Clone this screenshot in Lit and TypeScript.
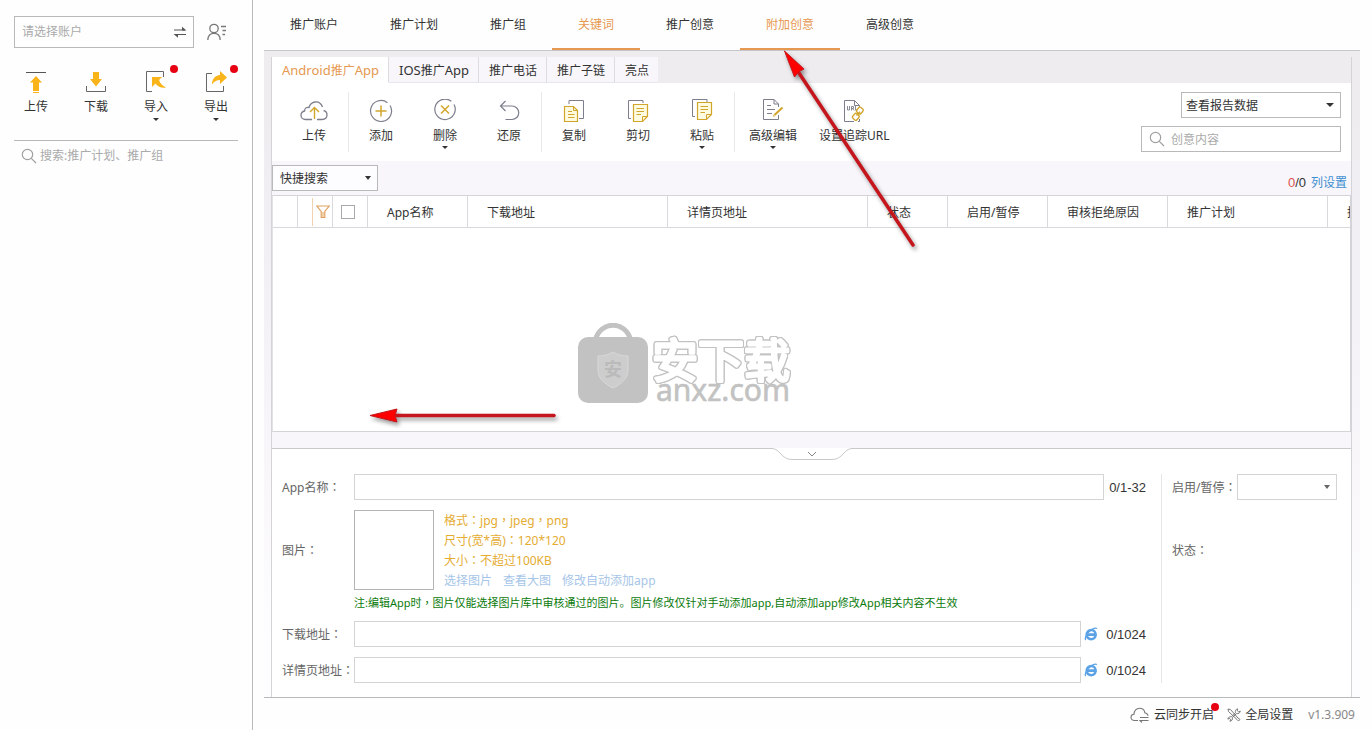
import { LitElement, html, svg, css, nothing, TemplateResult } from "lit";
import { customElement, state } from "lit/decorators.js";
import { classMap } from "lit/directives/class-map.js";

type Icon = TemplateResult;
interface Tool {
  label: string;
  icon: Icon;
  menu?: boolean;
  dot?: boolean;
}

const G = "#7d7f8c";
const Y = "#d2a52c";

const frame = (w: number, h: number, body: unknown): Icon => html`
  <svg width=${w} height=${h} viewBox="0 0 ${w} ${h}" fill="none" aria-hidden="true">${body}</svg>
`;

const caret = (w: number, h: number) =>
  html`<svg class="caret" width=${w} height=${h} viewBox="0 0 ${w} ${h}" aria-hidden="true">
    <path d="M0 0H${w}L${w / 2} ${h}Z" fill="currentColor" />
  </svg>`;

// Full-width punctuation set in the middle of its cell.
const colon = html`<span class="mid">：</span>`;
const comma = html`<span class="mid">，</span>`;

const magnifier = frame(
  16,
  16,
  svg`<g stroke="#a0a0a0" stroke-width="1.2"><circle cx="6.5" cy="6.5" r="5.2" /><path d="M10.3 10.3L15 15" /></g>`,
);

const swapIcon = frame(
  14,
  12,
  svg`<path d="M1 4H12M2 8.500H13" stroke="#555" stroke-width="1.200" /><path d="M9 .8L13.500 4.600H9ZM5 11.700L.5 7.900H5Z" fill="#555" />`,
);

const userIcon = frame(
  20,
  18,
  svg`<g stroke="#777" stroke-width="1.3"><circle cx="7" cy="5.500" r="4.200" /><path d="M.8 17C1 12.500 3.500 10.400 7 10.400S13 12.500 13.200 17" /><path d="M14 3.500H19M15.500 7.500H19M15.500 11.500H18" /></g>`,
);

const sideUpload = frame(
  22,
  22,
  svg`<path d="M1 1.500H21" stroke="#555" /><path d="M11 5L17 11.500H14V20H8V11.500H5ZM8 21H14V22H8Z" fill="#f8b418" />`,
);
const sideDownload = frame(
  22,
  22,
  svg`<path d="M1.500 15V20.500H20.500V15" stroke="#666" /><path d="M8 1H14V8H17L11 15.500L5 8H8Z" fill="#f8b418" />`,
);
const sideImport = frame(
  22,
  22,
  svg`<path d="M7 20.500H1.500V.5H18.500V6" stroke="#666" /><path d="M7 6H17L14 9C15.500 13 18 15 21 16.500C16.500 17.500 12.500 15.500 10.500 12.500L7 16Z" fill="#f8b418" />`,
);
const sideExport = frame(
  22,
  22,
  svg`<path d="M7 2.500H1.500V20.500H18.500V15" stroke="#666" /><path d="M15 0L22 6.500L15 13V9C11.500 9 9 10.500 7 13.500C7 8 10 4.500 15 4Z" fill="#f8b418" />`,
);

const cloudUpload = frame(
  28,
  24,
  svg`<path d="M17 20.500H22C25 20.500 27 18.500 27 15.800C27 13.500 25.500 12 23.600 11.500M22.500 8C21 4 18 2.500 15 3C12 3.500 9.800 5.500 9 8.500C6 8 4.500 9.500 4.600 12C2 12.500 1 14.500 1 16.300C1 18.700 3 20.500 5.500 20.500H12" stroke="${G}" stroke-width="1.300" /><path d="M14.500 20V8.500M10 13L14.500 8.500L19 13" stroke="${Y}" stroke-width="1.400" />`,
);
const addIcon = frame(
  24,
  24,
  svg`<path d="M18.500 3.700A10.500 10.500 0 1 0 21 6.500" stroke="${G}" stroke-width="1.200" /><path d="M12 6.500V17.500M6.500 12H17.500" stroke="${Y}" stroke-width="1.500" />`,
);
const removeIcon = frame(
  24,
  24,
  svg`<path d="M18.300 2.300A10.200 10.200 0 1 0 21 5.500" stroke="${G}" stroke-width="1.200" /><path d="M8 6.500L16 14.500M16 6.500L8 14.500" stroke="${Y}" stroke-width="1.500" />`,
);
const undoIcon = frame(
  24,
  24,
  svg`<path d="M8.500 2L3.500 7L8.500 12M3.500 7H15A6.500 6.500 0 0 1 15 20.500H8.500" stroke="${G}" stroke-width="1.200" />`,
);
const copyIcon = frame(
  24,
  24,
  svg`<path d="M7 5V1.500H21.500V19.500H17" stroke="${G}" /><path d="M2.500 7.500H11.500L15.500 11.500V22.500H2.500Z" fill="#fffbe0" stroke="${Y}" stroke-width="1.200" /><path d="M11.500 7.500V11.500H15.500M6 12.500H10M6 15.500H12.500M6 18.500H12.500" stroke="${Y}" />`,
);
const cutIcon = frame(
  24,
  24,
  svg`<path d="M17 4V1.500H2.500V19.500H5" stroke="${G}" /><path d="M7.500 5.500H21.500V17.500L16.500 22.500H7.500Z" fill="#fffbe0" stroke="${Y}" stroke-width="1.200" /><path d="M21.500 17.500H16.500V22.500M10.500 9.500H18M10.500 12.500H18M10.500 15.500H15" stroke="${Y}" />`,
);
const pasteIcon = frame(
  24,
  24,
  svg`<path d="M17 3V.5H2.500V17.500H5" stroke="${G}" /><path d="M7.500 3.500H21.500V15.500L16.500 20.500H7.500Z" fill="#fffbe0" stroke="${Y}" stroke-width="1.200" /><path d="M21.500 15.500H16.500V20.500M10.500 7.500H18M10.500 10.500H18M10.500 13.500H15" stroke="${Y}" />`,
);
const editIcon = frame(
  24,
  24,
  svg`<path d="M17.500 16V20.500H2.500V.5H13L17.500 5V8M13 .5V5H17.500M6 6.500H10M6 10.500H14M6 14.500H11" stroke="${G}" /><path d="M13.500 16L21.500 8.500" stroke="${Y}" stroke-width="2" /><path d="M12 17.800L12.500 15.500L14 17.200Z" fill="${Y}" />`,
);
const urlIcon = frame(
  24,
  24,
  svg`<path d="M12 22.500H2.500V1.500H12.500L17.500 6.500V8M12.500 1.500V6.500H17.500M17.500 20V22.500H16" stroke="${G}" />
    <path d="M5.500 7V11H7.500V7M9.500 11.500V7.500H11.500V9.500H9.500M10.500 9.500L12 11.500M13.500 7V11H15.500" stroke="${G}" stroke-width=".9" />
    <g stroke="${Y}" stroke-width="1.400"><rect x="15.500" y="8.500" width="5.500" height="6" rx="1.500" transform="rotate(40 18 11)" /><rect x="11" y="15" width="5.500" height="6" rx="1.500" transform="rotate(40 14 18)" /><path d="M14.500 16.500L18 12.800" /></g>`,
);

const funnel = frame(
  14,
  14,
  svg`<path d="M.8 1H13.200L8.800 6.500V12.500H5.200V6.500Z" stroke="#e0a160" stroke-width="1.200" /><path d="M6 7H8V12H6Z" fill="#f0d0a8" />`,
);

const browserIcon = frame(
  14,
  14,
  svg`<path d="M11.500 9C10.900 11 9.300 12.200 7.200 12.200C4.500 12.200 2.700 10.200 2.700 7.600S4.700 3 7.200 3S11.600 5 11.600 7.600H4" stroke="#5ba3e6" stroke-width="2.600" /><path d="M1.800 13C.4 11.800 2.200 7.200 5.800 4C9 1.400 12 .4 12.800 1.800" stroke="#5ba3e6" stroke-width="1.300" />`,
);

const cloudSync = frame(
  20,
  16,
  svg`<path d="M8 13.500H4.500C2.500 13.500 1 12.200 1 10.300C1 8.500 2.200 7.300 4 7.200C4 3.700 6.500 1.200 9.500 1.200C12.500 1.200 14.500 3.200 14.800 5.700C16.500 6 17.800 7.200 18 8.800" stroke="#777" stroke-width="1.100" /><path d="M10 10.500H18.500M18.500 13.500H10L12 15.500" stroke="#777" stroke-width="1.100" />`,
);
const toolsIcon = frame(
  14,
  14,
  svg`<g stroke="#777"><path d="M1 1L3.500 1.500L11 10L13 11.500L11.500 13L10 11.500L1.500 3.500Z" /><path d="M10.500 .8C8.800 1.300 8 3 8.500 4.700L4.500 8.800C2.800 8.400 1.200 9.300.8 11L2.800 10.600L3.500 11.500L3 13.300C4.800 13 5.700 11.500 5.300 9.700L9.500 5.600C11.300 6 13 5 13.300 3.200L11.500 3.700L10.300 2.700Z" /></g>`,
);

const SIDE_TOOLS: Tool[] = [
  { label: "上传", icon: sideUpload },
  { label: "下载", icon: sideDownload },
  { label: "导入", icon: sideImport, menu: true, dot: true },
  { label: "导出", icon: sideExport, menu: true, dot: true },
];

const NAV = ["推广账户", "推广计划", "推广组", "关键词", "推广创意", "附加创意", "高级创意"];
const NAV_MARKED = new Set(["关键词", "附加创意"]);

const TABS: TemplateResult[] = [
  html`<span class="latin">Android</span>推广<span class="latin">App</span>`,
  html`<span class="latin">IOS</span>推广<span class="latin">App</span>`,
  html`推广电话`,
  html`推广子链`,
  html`亮点`,
];

const TOOL_GROUPS: Tool[][] = [
  [{ label: "上传", icon: cloudUpload }],
  [
    { label: "添加", icon: addIcon },
    { label: "删除", icon: removeIcon, menu: true },
    { label: "还原", icon: undoIcon },
  ],
  [
    { label: "复制", icon: copyIcon },
    { label: "剪切", icon: cutIcon },
    { label: "粘贴", icon: pasteIcon, menu: true },
  ],
  [
    { label: "高级编辑", icon: editIcon, menu: true },
    { label: "设置追踪URL", icon: urlIcon },
  ],
];

const COLUMNS: [string, number][] = [
  ["App名称", 100],
  ["下载地址", 200],
  ["详情页地址", 200],
  ["状态", 80],
  ["启用/暂停", 100],
  ["审核拒绝原因", 120],
  ["推广计划", 160],
  ["推广组", 160],
];

const shared = css`
  :host {
    display: block;
    color: #333;
    font: 12px/16px "Noto Sans", "Noto Sans CJK SC", sans-serif;
  }
  * {
    box-sizing: border-box;
  }
  button,
  input,
  select {
    font: inherit;
    color: inherit;
    margin: 0;
    padding: 0;
    border: 0;
    border-radius: 0;
    background: none;
    outline: none;
  }
  input::placeholder {
    color: #aaa;
    opacity: 1;
  }
  svg {
    display: block;
    flex: none;
  }
  a {
    text-decoration: none;
  }
  .mid {
    font-family: "Noto Sans CJK TC", sans-serif;
    line-height: 0;
  }
  .pick {
    position: relative;
    display: flex;
    align-items: center;
    height: 26px;
    border: 1px solid #b9b9b9;
    background: #fff;
  }
  .pick select {
    appearance: none;
    flex: 1;
    width: 100%;
    height: 100%;
    padding: 2px 20px 0 4px;
  }
  .pick .caret {
    position: absolute;
    right: 6px;
    pointer-events: none;
  }
`;

@customElement("account-sidebar")
class AccountSidebar extends LitElement {
  static styles = [
    shared,
    css`
      :host {
        flex: none;
        width: 253px;
        padding: 16px 14px;
        border-right: 1px solid #b9b9bb;
      }
      .account {
        display: flex;
        align-items: center;
        gap: 13px;
      }
      .box {
        display: flex;
        align-items: center;
        width: 180px;
        height: 32px;
        padding: 0 6px 0 7px;
        border: 1px solid #b9b9b9;
      }
      .box input,
      .search input {
        flex: 1;
        min-width: 0;
      }
      .tools {
        display: flex;
        margin: 23px -8px 0;
      }
      .tool {
        position: relative;
        display: flex;
        flex-direction: column;
        align-items: center;
        width: 60px;
        height: 54px;
      }
      .tool span {
        margin: 6px 0 3px;
      }
      .dot {
        position: absolute;
        top: -6px;
        right: 8px;
        width: 8px;
        height: 8px;
        border-radius: 50%;
        background: #e60012;
      }
      .search {
        display: flex;
        align-items: center;
        gap: 3px;
        margin-top: 15px;
        padding: 7px 7px 0;
        border-top: 1px solid #b9b9b9;
      }
    `,
  ];

  render() {
    return html`
      <div class="account">
        <div class="box">
          <input aria-label="账户" placeholder="请选择账户" />
          <button aria-label="切换账户">${swapIcon}</button>
        </div>
        <button aria-label="账户管理">${userIcon}</button>
      </div>
      <div class="tools">
        ${SIDE_TOOLS.map(
          (t) => html`<button class="tool">
            ${t.icon}<span>${t.label}</span>${t.menu ? caret(6, 3) : nothing}
            ${t.dot ? html`<i class="dot"></i>` : nothing}
          </button>`,
        )}
      </div>
      <label class="search">${magnifier}<input aria-label="搜索" placeholder="搜索:推广计划、推广组" /></label>
    `;
  }
}

@customElement("creative-toolbar")
class CreativeToolbar extends LitElement {
  static styles = [
    shared,
    css`
      :host {
        display: flex;
        justify-content: space-between;
        height: 78px;
        padding: 9px 10px;
        background: #fff;
      }
      .groups,
      .group {
        display: flex;
      }
      .group {
        padding-top: 7px;
      }
      .group + .group {
        border-left: 1px solid #e9e9ec;
      }
      .group:first-child {
        padding-right: 2px;
      }
      .tool {
        display: flex;
        flex-direction: column;
        align-items: center;
        min-width: 64px;
        height: 52px;
        padding: 0 8px;
        white-space: nowrap;
      }
      .tool.wide {
        min-width: 76px;
      }
      .tool span {
        margin: 5px 0 2px;
      }
      .side {
        display: flex;
        flex-direction: column;
        align-items: flex-end;
        gap: 8px;
      }
      .side .pick {
        width: 160px;
      }
      .search {
        display: flex;
        align-items: center;
        gap: 6px;
        width: 200px;
        height: 26px;
        padding: 0 7px;
        border: 1px solid #b9b9b9;
      }
      .search input {
        flex: 1;
        min-width: 0;
        padding-top: 2px;
      }
    `,
  ];

  render() {
    return html`
      <div class="groups">
        ${TOOL_GROUPS.map(
          (g) => html`<div class="group">
            ${g.map(
              (t) => html`<button class=${classMap({ tool: true, wide: t.label.length > 3 })}>
                ${t.icon}<span>${t.label}</span>${t.menu ? caret(6, 3) : nothing}
              </button>`,
            )}
          </div>`,
        )}
      </div>
      <div class="side">
        <div class="pick">
          <select aria-label="报告数据">
            <option>查看报告数据</option>
          </select>
          ${caret(8, 4)}
        </div>
        <label class="search">${magnifier}<input aria-label="创意内容" placeholder="创意内容" /></label>
      </div>
    `;
  }
}

@customElement("creative-table")
class CreativeTable extends LitElement {
  static styles = [
    shared,
    css`
      :host {
        display: flex;
        flex-direction: column;
        flex: 1;
        min-height: 0;
      }
      .bar {
        display: flex;
        align-items: center;
        justify-content: space-between;
        height: 34px;
        padding-right: 4px;
      }
      .bar .pick {
        width: 106px;
        background: #fdfcfe;
      }
      .bar select {
        padding-left: 7px;
      }
      .stats {
        display: flex;
        gap: 5px;
        padding-top: 10px;
      }
      .num {
        font: 13px/16px "Liberation Sans", sans-serif;
      }
      .red {
        color: #d9534f;
      }
      .stats a {
        color: #3d8fd1;
      }
      .grid {
        position: relative;
        flex: 1;
        overflow: hidden;
        border: 1px solid #d4d4d8;
        border-left-color: #e2e2e6;
        background: #fff;
      }
      table {
        border-collapse: separate;
        border-spacing: 0;
        table-layout: fixed;
        width: 0;
      }
      th {
        height: 32px;
        padding: 2px 0 0 19px;
        border-right: 1px solid #d9d9dd;
        border-bottom: 1px solid #d9d9dd;
        font-weight: 400;
        text-align: left;
        white-space: nowrap;
      }
      th.tight {
        padding: 0;
      }
      .filter {
        display: flex;
        align-items: center;
        justify-content: center;
        width: 21px;
        height: 28px;
        margin-left: 14px;
        border-left: 1px solid #f2d3b0;
      }
      .tick {
        display: block;
        appearance: none;
        width: 14px;
        height: 14px;
        margin-left: 8px;
        border: 1px solid #a9a9ad;
      }
      .mark {
        position: absolute;
        top: 127px;
        left: calc(50% - 236px);
        pointer-events: none;
      }
      .outline {
        font: 400 46px "Noto Sans CJK SC", sans-serif;
        filter: drop-shadow(1px 0 #c2c2c2) drop-shadow(-1px 0 #c2c2c2) drop-shadow(0 1px #c2c2c2)
          drop-shadow(0 -1px #c2c2c2);
      }
      .site {
        font: 30px "Noto Sans", sans-serif;
      }
      .seal {
        font: 700 18px "Noto Sans CJK SC", sans-serif;
      }
    `,
  ];

  render() {
    return html`
      <div class="bar">
        <div class="pick">
          <select aria-label="快捷搜索">
            <option>快捷搜索</option>
          </select>
          ${caret(6, 4)}
        </div>
        <div class="stats">
          <span class="num"><span class="red">0</span>/0</span><a href="#">列设置</a>
        </div>
      </div>
      <div class="grid">
        <table>
          <colgroup>
            <col width="25" />
            <col width="35" />
            <col width="35" />
            ${COLUMNS.map((c) => html`<col width=${c[1]} />`)}
          </colgroup>
          <thead>
            <tr>
              <th class="tight"></th>
              <th class="tight"><button class="filter" aria-label="筛选">${funnel}</button></th>
              <th class="tight"><input class="tick" type="checkbox" aria-label="全选" /></th>
              ${COLUMNS.map((c) => html`<th>${c[0]}</th>`)}
            </tr>
          </thead>
        </table>
        <svg class="mark" width="230" height="92" viewBox="0 0 230 92">
          <path d="M19 18C24 -3 50 -3 55 18" fill="none" stroke="#c2c2c2" stroke-width="5" />
          <rect x="2" y="14" width="70" height="66" rx="10" fill="#c2c2c2" />
          <path
            d="M37 29C42 32 47 33 52 33V47C52 56 45 61 37 65C29 61 22 56 22 47V33C27 33 32 32 37 29Z"
            fill="#cdcdcd"
            stroke="#d8d8d8"
          />
          <text class="seal" x="28" y="53" fill="#bababa">安</text>
          <text class="outline" x="76" y="54" fill="#fff" stroke="#fff" stroke-width="3" stroke-linejoin="round">安下载</text>
          <text class="site" x="80" y="78" fill="#c2c2c2" stroke="#c2c2c2" stroke-width=".6">anxz.com</text>
        </svg>
      </div>
    `;
  }
}

@customElement("creative-form")
class CreativeForm extends LitElement {
  static styles = [
    shared,
    css`
      :host {
        position: relative;
        display: flex;
        flex: none;
        padding: 25px 14px 14px 10px;
        border-top: 1px solid #c9c9cc;
        background: #fff;
        color: #666;
      }
      .fold {
        position: absolute;
        top: -1px;
        left: calc(50% - 40px);
      }
      .fields {
        flex: 1;
        display: flex;
        flex-direction: column;
        gap: 10px;
        min-width: 0;
        padding-right: 15px;
      }
      .row {
        display: flex;
        align-items: center;
      }
      .row > label,
      .row > .label {
        flex: none;
        width: 72px;
        padding-top: 2px;
        white-space: nowrap;
      }
      .row > input {
        flex: 1;
        min-width: 0;
        height: 26px;
        padding: 0 4px;
        border: 1px solid #d4d4d4;
      }
      .count {
        flex: none;
        margin-left: 5px;
        padding-top: 2px;
        color: #333;
        font: 13px/16px "Liberation Sans", sans-serif;
      }
      .link {
        margin: 0 3px;
      }
      .preview {
        width: 80px;
        height: 80px;
        border: 1px solid #b4b4b4;
      }
      .facts {
        margin: 0 0 0 10px;
        padding-top: 1px;
        height: 80px;
        color: #e5ac32;
        line-height: 20px;
      }
      .facts p {
        margin: 0;
      }
      .facts a {
        margin-right: 11px;
        color: #a6c5e8;
      }
      .note {
        margin: -5px 0 0 72px;
        color: #0b7a0b;
        font-size: 11px;
      }
      .status {
        flex: none;
        width: 176px;
        padding-left: 10px;
        border-left: 1px solid #e6e6e8;
      }
      .status label {
        width: 65px;
      }
      .status .pick {
        flex: 1;
        border-color: #d4d4d4;
      }
      .status .state {
        height: 80px;
        margin-top: 10px;
      }
    `,
  ];

  private urlRow(id: string, label: string) {
    return html`<div class="row">
      <label for=${id}>${label}${colon}</label>
      <input id=${id} />
      <button class="link" aria-label="打开链接">${browserIcon}</button>
      <span class="count">0/1024</span>
    </div>`;
  }

  render() {
    return html`
      <button class="fold" aria-label="收起">
        ${frame(
          80,
          13,
          svg`<path d="M0 0H80V1C72 1 70 11.500 60 11.500H20C10 11.500 8 1 0 1Z" fill="#fff" /><path d="M0 .5C8 .5 9 11.500 20 11.500H60C71 11.500 72 .5 80 .5" stroke="#c9c9cc" /><path d="M36 4L40 8L44 4" stroke="#888" />`,
        )}
      </button>
      <div class="fields">
        <div class="row">
          <label for="name">App名称${colon}</label>
          <input id="name" />
          <span class="count">0/1-32</span>
        </div>
        <div class="row">
          <span class="label">图片${colon}</span>
          <div class="preview"></div>
          <div class="facts">
            <p>格式${colon}jpg${comma}jpeg${comma}png</p>
            <p>尺寸(宽*高)${colon}120*120</p>
            <p>大小${colon}不超过100KB</p>
            <p><a href="#">选择图片</a><a href="#">查看大图</a><a href="#">修改自动添加app</a></p>
          </div>
        </div>
        <p class="note">
          注:编辑App时${comma}图片仅能选择图片库中审核通过的图片。图片修改仅针对手动添加app,自动添加app修改App相关内容不生效
        </p>
        ${this.urlRow("download", "下载地址")} ${this.urlRow("detail", "详情页地址")}
      </div>
      <div class="status">
        <div class="row">
          <label for="switch">启用/暂停${colon}</label>
          <div class="pick"><select id="switch"><option></option></select>${caret(6, 4)}</div>
        </div>
        <div class="row state"><span class="label">状态${colon}</span></div>
      </div>
    `;
  }
}

@customElement("app-root")
class AppRoot extends LitElement {
  @state() private tab = 0;

  static styles = [
    shared,
    css`
      :host {
        position: relative;
        display: flex;
        height: 100vh;
        min-height: 640px;
        overflow: hidden;
        background: #fefefe;
      }
      main {
        flex: 1;
        display: flex;
        flex-direction: column;
        min-width: 0;
        margin: 0 12px 0 11px;
      }
      nav {
        display: flex;
        height: 51px;
        border-bottom: 1px solid #c6c5c9;
      }
      nav a {
        height: 50px;
        padding: 17px 26px 0;
        color: #333;
      }
      nav a.on {
        color: #e69850;
        border-bottom: 2px solid #e69850;
      }
      .body {
        flex: 1;
        display: flex;
        min-height: 0;
        padding: 6px 8px 0 7px;
        background: linear-gradient(#eeecef 10%, #f3f1f5 40%, #fdfcfe 90%);
      }
      .panel {
        flex: 1;
        display: flex;
        flex-direction: column;
        min-width: 0;
        border-left: 1px solid #d4d3d8;
        border-right: 1px solid #d4d3d8;
        background: #f8f6fa;
      }
      .tabs {
        display: flex;
        height: 26px;
        background: #eeecef;
      }
      .tab {
        padding: 2px 9px 0 10px;
        border-right: 1px solid #dddce1;
        border-bottom: 1px solid #e8e7ec;
        background: #f8f6fa;
      }
      .tab:last-child {
        border-right: 0;
      }
      .tab.on {
        color: #e69850;
        background: #fff;
        border-bottom-color: #fff;
      }
      .latin {
        font-size: 13px;
      }
      .gap {
        flex: none;
        height: 16px;
      }
      footer {
        display: flex;
        align-items: center;
        justify-content: flex-end;
        height: 33px;
        padding: 1px 5px 0 0;
        border-top: 1px solid #b9b9bb;
      }
      footer button {
        position: relative;
        display: flex;
        align-items: center;
        gap: 4px;
        margin-right: 13px;
      }
      footer .version {
        margin-left: 2px;
        color: #888;
      }
      .dot {
        position: absolute;
        top: -4px;
        right: -5px;
        width: 8px;
        height: 8px;
        border-radius: 50%;
        background: #e60012;
      }
      .notes {
        position: absolute;
        top: 0;
        left: 0;
        pointer-events: none;
        filter: drop-shadow(2px 3px 2px rgba(0, 0, 0, 0.4));
      }
    `,
  ];

  render() {
    return html`
      <account-sidebar></account-sidebar>
      <main>
        <nav>
          ${NAV.map((n) => html`<a href="#" class=${classMap({ on: NAV_MARKED.has(n) })}>${n}</a>`)}
        </nav>
        <div class="body">
          <div class="panel">
            <div class="tabs">
              ${TABS.map(
                (t, i) => html`<button
                  class=${classMap({ tab: true, on: this.tab === i })}
                  @click=${() => (this.tab = i)}
                >${t}</button>`,
              )}
            </div>
            <creative-toolbar></creative-toolbar>
            <creative-table></creative-table>
            <div class="gap"></div>
            <creative-form></creative-form>
          </div>
        </div>
        <footer>
          <button>${cloudSync}云同步开启<i class="dot"></i></button>
          <button>${toolsIcon}全局设置</button>
          <span class="version">v1.3.909</span>
        </footer>
      </main>
      <svg class="notes" width="930" height="430" viewBox="0 0 930 430" aria-hidden="true">
        <path d="M797 70L913 245" stroke="#c4161c" stroke-width="3.500" stroke-linecap="round" />
        <path d="M784.500 51L804 69L799 71.500L794.500 77Z" fill="#f00" stroke="#c4161c" />
        <path d="M395 415.500H554" stroke="#c4161c" stroke-width="3.500" stroke-linecap="round" />
        <path d="M370 415.500L397 409L395 415.500L397 422Z" fill="#f00" stroke="#c4161c" />
      </svg>
    `;
  }
}
